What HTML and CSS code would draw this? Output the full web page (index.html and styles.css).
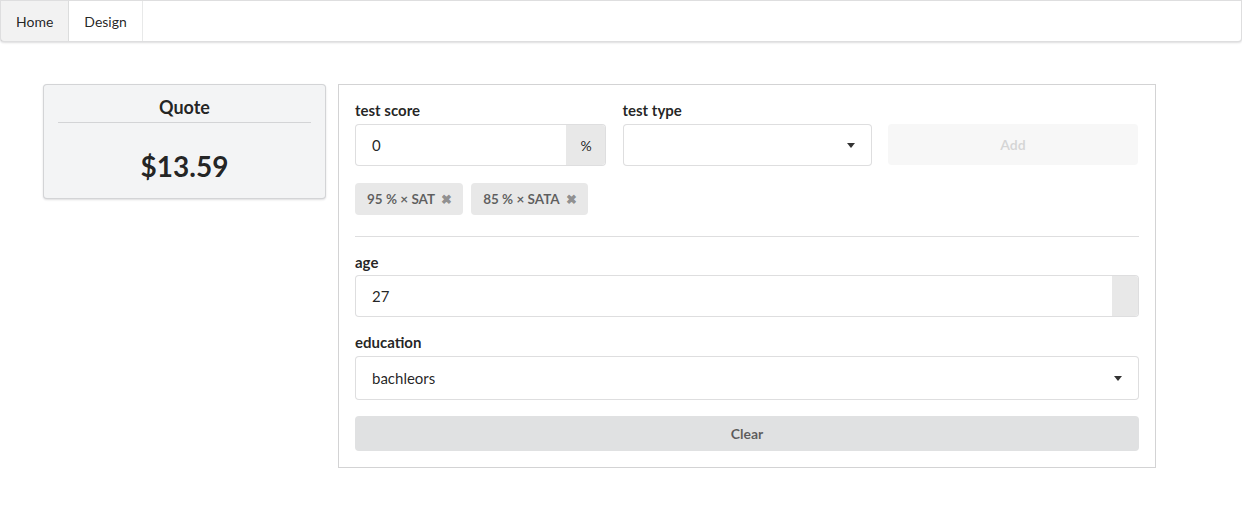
FILE: index.html
```html
<!DOCTYPE html>
<html>
<head>
<meta charset="utf-8">
<link rel="stylesheet" href="styles.css">
</head>
<body>
<nav class="menu">
  <a class="item active">Home</a>
  <a class="item">Design</a>
</nav>
<main class="page">
  <section class="quote">
    <h3 class="quote-title">Quote</h3>
    <div class="quote-value">$13.59</div>
  </section>
  <section class="form">
    <div class="row3">
      <div class="field">
        <label class="lbl">test score</label>
        <div class="input labeled">
          <span class="value">0</span>
          <span class="addon">%</span>
        </div>
      </div>
      <div class="field">
        <label class="lbl">test type</label>
        <div class="input select">
          <span class="value"></span>
          <span class="caret"></span>
        </div>
      </div>
      <div class="field bottom">
        <button class="btn disabled">Add</button>
      </div>
    </div>
    <div class="tags">
      <span class="tag">95 % × SAT <span class="x">✖</span></span>
      <span class="tag">85 % × SATA <span class="x">✖</span></span>
    </div>
    <hr class="divider">
    <div class="field">
      <label class="lbl">age</label>
      <div class="input labeled">
        <span class="value">27</span>
        <span class="addon empty"></span>
      </div>
    </div>
    <div class="field">
      <label class="lbl lbl-edu">education</label>
      <div class="input select tall">
        <span class="value">bachleors</span>
        <span class="caret"></span>
      </div>
    </div>
    <button class="btn clear">Clear</button>
  </section>
</main>
</body>
</html>
```
FILE: styles.css
```css
* { box-sizing: border-box; }
html, body { margin: 0; padding: 0; }
body {
  font-family: Lato, "Helvetica Neue", Arial, sans-serif;
  font-size: 14px;
  color: rgba(0,0,0,.87);
  background: #fff;
}
.menu {
  display: flex;
  height: 42px;
  border: 1px solid rgba(34,36,38,.15);
  border-radius: 0 0 4px 4px;
  box-shadow: 0 1px 2px 0 rgba(34,36,38,.15);
  background: #fff;
}
.item {
  display: flex;
  align-items: center;
  padding: 0 15px;
  border-right: 1px solid rgba(34,36,38,.1);
  color: rgba(0,0,0,.87);
  font-size: 14px;
}
.item.active { background: rgba(0,0,0,.05); }
.page {
  display: flex;
  align-items: flex-start;
  gap: 12px;
  padding: 42px 0 0 43px;
}
.quote {
  width: 283px;
  background: #f3f4f5;
  border: 1px solid rgba(34,36,38,.15);
  border-radius: 4px;
  box-shadow: 0 1px 2px 0 rgba(34,36,38,.15);
  padding: 12px 14px 14px;
  text-align: center;
}
.quote-title {
  margin: 0;
  font-size: 18px;
  font-weight: 700;
  line-height: 20px;
  padding-bottom: 5px;
  border-bottom: 1px solid rgba(34,36,38,.15);
}
.quote-value {
  font-size: 28px;
  font-weight: 700;
  line-height: 36px;
  margin-top: 25px;
}
.form {
  width: 818px;
  border: 1px solid rgba(34,36,38,.2);
  padding: 16px;
}
.row3 {
  display: grid;
  grid-template-columns: 251px 249px 250px;
  column-gap: 16.5px;
}
.field { display: flex; flex-direction: column; margin-bottom: 16px; }
.field.bottom { justify-content: flex-end; }
.lbl {
  font-size: 15px;
  font-weight: 700;
  line-height: 18px;
  margin-bottom: 4px;
}
.row3 .lbl, .lbl-edu { margin-bottom: 5px; }
.input {
  display: flex;
  align-items: center;
  height: 42px;
  border: 1px solid rgba(34,36,38,.15);
  border-radius: 4px;
  background: #fff;
  font-size: 15px;
  overflow: hidden;
}
.input.tall { height: 44px; }
.value { flex: 1; padding-left: 16px; }
.addon {
  align-self: stretch;
  width: 40px;
  margin: -1px -1px -1px 0;
  background: #e8e8e8;
  display: flex;
  align-items: center;
  justify-content: center;
  font-size: 14px;
  color: rgba(0,0,0,.87);
}
.addon.empty { width: 27px; }
.caret {
  width: 0; height: 0;
  border-left: 4.5px solid transparent;
  border-right: 4.5px solid transparent;
  border-top: 5px solid rgba(0,0,0,.8);
  margin-right: 16px;
}
.btn {
  font-family: inherit;
  border: 0;
  border-radius: 4px;
  font-weight: 700;
  font-size: 14px;
  cursor: pointer;
}
.btn.disabled {
  height: 41px;
  margin-bottom: 1px;
  background: #e0e1e2;
  opacity: .25;
  color: rgba(0,0,0,.6);
}
.tags { display: flex; gap: 8px; margin-top: 1px; }
.tag {
  display: inline-flex;
  align-items: center;
  height: 32px;
  padding: 0 11px 0 12px;
  background: #e8e8e8;
  border-radius: 4px;
  font-size: 13.5px;
  font-weight: 700;
  color: rgba(0,0,0,.6);
}
.tag .x { margin-left: 6px; font-size: 13px; color: rgba(0,0,0,.4); }
.divider {
  border: 0;
  border-top: 1px solid rgba(34,36,38,.15);
  margin: 21px 0 16px;
}
.btn.clear {
  display: block;
  width: 100%;
  height: 35px;
  background: #e0e1e2;
  color: rgba(0,0,0,.6);
  font-size: 14px;
}
```
